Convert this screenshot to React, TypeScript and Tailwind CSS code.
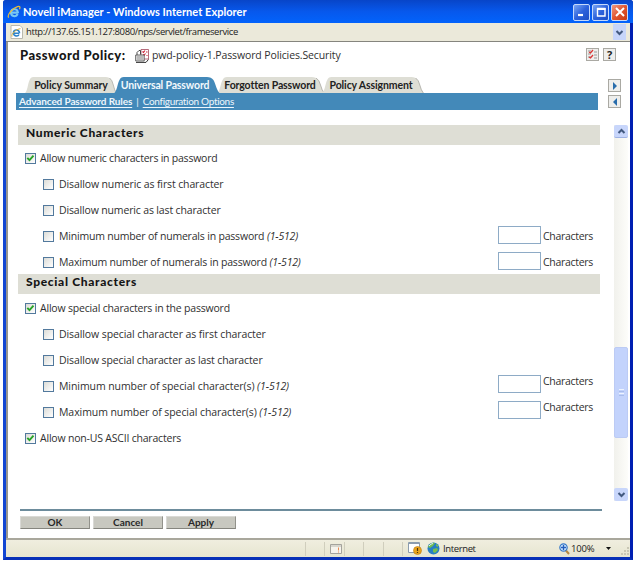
import type { ReactNode } from 'react';

const IeLogo = ({ size }: { size: number }) => (
  <svg width={size} height={size} viewBox="0 0 16 16" fill="none">
    <path d="M12.5 9H4.6a3.6 3.6 0 0 0 6.9 1.6M4.6 8.4h7.9A4.2 4.2 0 0 0 4.3 8c0 5 6 6.500 8 2.500" stroke="#79c8f4" strokeWidth="2.200" />
    <path d="M2 14.500C-.5 12 6 3.500 12 1.800c3-.8 3.300.7 2.200 3" stroke="#e9bd3c" strokeWidth="1.400" />
  </svg>
);

const PageIcon = () => (
  <svg width="13" height="14" viewBox="0 0 13 14" fill="none">
    <path d="M1 .5h9l2.500 2.500v10.500H1z" fill="#fff" stroke="#b9b9ae" />
    <path d="M9.200 8.300H3.500a3 3 0 0 1 5.900-1v.9M3.500 8.300c.2 3 4.500 3.500 5.500 1.200" stroke="#2d84cb" strokeWidth="1.600" />
    <path d="M2 11.500C1 9 6 4 10.500 3.700" stroke="#d9b13b" />
  </svg>
);

const PolicyIcon = () => (
  <svg width="14" height="14" viewBox="0 0 14 14" fill="none">
    <path d="M6 .5h7.500v9.500H6z" fill="#fff" stroke="#a3475a" strokeWidth=".8" />
    <path d="M2 6V3.500l2-2h1.500v4" stroke="#444" />
    <path d="m7.500 2.500 1 1 1.500-2M8 5.500l1 1 1.500-2M11 3h1.500M11.500 6.500h1" stroke="#cf2338" strokeWidth="1.100" />
    <path d="M.7 6h8.500v6H.7z" fill="#e8e8e8" stroke="#555" strokeWidth=".9" />
    <path d="M2 8h6M2 10h6" stroke="#777" strokeWidth=".8" />
    <path d="M1 13.400h10l2.500-3" stroke="#333" />
  </svg>
);

const Chevron = ({ up = false }: { up?: boolean }) => (
  <svg width="9" height="7" viewBox="0 0 9 7" fill="none">
    <path d={up ? 'M1.500 5 4.500 2l3 3' : 'M1.500 2l3 3 3-3'} stroke="#42597f" strokeWidth="2" />
  </svg>
);

const WinButton = ({ kind }: { kind: 'min' | 'max' | 'close' }) => (
  <div
    className={`flex h-[17px] w-[17px] items-center justify-center rounded-[2px] border border-[#c5d9fb] bg-linear-to-br ${
      kind === 'close' ? 'from-[#ee9880] via-[#e0552f] to-[#c83a12]' : 'from-[#7ca5f3] via-[#2d62dc] to-[#1d4dc4]'
    }`}
  >
    <svg width="12" height="12" viewBox="0 0 12 12" fill="none" stroke="#fff">
      {kind === 'min' && <path d="M2 9h5" strokeWidth="2.200" />}
      {kind === 'max' && <path d="M2 2.500h8.500M2.500 2v8h7.500V2" strokeWidth="1.400" />}
      {kind === 'max' && <path d="M2 3h8.500" strokeWidth="2" />}
      {kind === 'close' && <path d="m2 2 8 8M10 2l-8 8" strokeWidth="2" />}
    </svg>
  </div>
);

const ToolButton = ({ children }: { children: ReactNode }) => (
  <div className="flex h-[13px] w-[13px] shrink-0 items-center justify-center border border-[#aaa9a3] bg-[#eeeeec] text-[11px] leading-none font-bold text-[#222]">
    {children}
  </div>
);

const Checkbox = ({ checked }: { checked?: boolean }) => (
  <div className="flex h-[11px] w-[11px] shrink-0 items-center justify-center border border-[#52799d] bg-linear-to-br from-[#dcdcd7] to-white">
    {checked && (
      <svg width="9" height="9" viewBox="0 0 9 9" fill="none">
        <path d="m1.300 3.800 2.200 2.400 4-4.500" stroke="#27a327" strokeWidth="1.900" />
      </svg>
    )}
  </div>
);

type RowProps = { label: string; spacing: string; range?: boolean; checked?: boolean; count?: 'center' | 'raised' };

const Row = ({ label, spacing, range, checked, count }: RowProps) => (
  <div className={`flex h-[26px] items-center ${checked ? 'pl-[7px]' : 'pl-[25px]'}`}>
    <Checkbox checked={checked} />
    <span className={`${checked ? 'ml-[4px]' : 'ml-[5px]'} pt-px whitespace-pre ${spacing}`}>
      {label}
      {range && <i> (1-512)</i>}
    </span>
    {count && (
      <div className={`mr-[6px] ml-auto flex h-[18px] gap-[2px] ${count === 'raised' ? 'mt-[-5px]' : 'mt-[-2px]'}`}>
        <div className="h-[18px] w-[43px] border border-[#8eabc6] bg-white" />
        <span className={`w-[51px] tracking-[-0.3px] ${count === 'raised' ? 'leading-[13px]' : 'leading-[20px]'}`}>Characters</span>
      </div>
    )}
  </div>
);

const Section = ({ title, spacing }: { title: string; spacing: string }) => (
  <div className={`h-[20px] bg-[#deded5] pl-[8px] font-[Lato,sans-serif] text-[12px] leading-[16px] font-black whitespace-nowrap text-[#151515] ${spacing}`}>
    {title}
  </div>
);

const Tab = ({ label, width, active, spacing }: { label: string; width: string; active?: boolean; spacing: string }) => (
  <div className={`relative -mr-[5px] h-[17px] shrink-0 ${width} ${active ? 'z-10' : ''}`}>
    <svg className="absolute inset-0 h-full w-full" viewBox="0 0 100 17" preserveAspectRatio="none">
      <path
        d="M0 17C4 15 4 6 6 3Q7 0 10 0H87Q91 0 93 3C95 6 96 15 100 17z"
        fill={active ? '#4389b9' : '#deded5'}
      />
      {!active && <path d="M91 1Q94 3 95 8T99 17" fill="none" stroke="#aaa9a3" strokeWidth=".8" />}
    </svg>
    <span
      className={`relative block text-center font-[Lato,sans-serif] text-[10.500px] leading-[16px] font-bold whitespace-nowrap ${spacing} ${
        active ? 'text-[#f2f8fc]' : 'text-[#222]'
      }`}
    >
      {label}
    </span>
  </div>
);

const ActionButton = ({ label }: { label: string }) => (
  <div className="h-[13px] w-[70px] border border-t-[#d9d9d5] border-r-[#92928b] border-b-[#85857e] border-l-[#d9d9d5] bg-[#c8c8c0] text-center font-[Lato,sans-serif] text-[10px] leading-[11px] font-bold text-[#292929]">
    {label}
  </div>
);

const StatusBar = () => (
  <div className="flex h-[19px] shrink-0 items-center border-t-2 border-[#a9a79c] bg-linear-to-b from-[#f0eedf] to-[#e6e5d0] text-[9.500px] text-[#222]">
    <div className="ml-[299px] h-[14px] w-[19px] border-l border-[#d0cebd]" />
    <div className="flex h-[14px] w-[21px] items-center border-x border-[#d0cebd] pl-[5px]">
      <svg width="12" height="10" viewBox="0 0 12 10">
        <path d="M.5.500h11v9H.5z" fill="#f7f4ed" stroke="#a4a39c" />
        <path d="M1 2h10" stroke="#b8b8b0" />
        <path d="M8.500 3.500v3M8.500 7.500v1" stroke="#e98b54" />
      </svg>
    </div>
    <div className="h-[14px] w-[19px] border-r border-[#d0cebd]" />
    <div className="h-[14px] w-[20px] border-r border-[#d0cebd]" />
    <div className="h-[14px] w-[19px] border-r border-[#d0cebd]" />
    <svg className="ml-[5px]" width="14" height="13" viewBox="0 0 14 13">
      <path d="M.5.500h11v10H.5z" fill="#fff" stroke="#8b9cae" />
      <path d="M1 1.500h10" stroke="#8b9cae" />
      <circle cx="9.500" cy="8.500" r="4" fill="#e9a51d" stroke="#bc7a12" strokeWidth=".6" />
      <path d="M9.500 6v3M9.500 10v1" stroke="#4d3106" strokeWidth="1.200" />
    </svg>
    <svg className="ml-[5px]" width="13" height="13" viewBox="0 0 13 13">
      <circle cx="6.500" cy="6.500" r="6" fill="#277fc4" />
      <path d="M2 3q3-3 6-2L6 4 3 6 1 5zM6 7l4-1 1 2-3 3-2-1zM9 2l2 1v2L9 4z" fill="#75bd50" />
      <path d="M2 4q2-2.500 4-2.500" stroke="#d9efff" fill="none" />
    </svg>
    <span className="ml-[3px] pt-px tracking-[-0.38px]">Internet</span>
    <div className="ml-auto flex items-center">
      <svg width="11" height="12" viewBox="0 0 11 12" fill="none">
        <path d="m6.500 7 3.500 4" stroke="#b88a42" strokeWidth="2" />
        <circle cx="4.500" cy="4.500" r="3.700" fill="#d4ebff" stroke="#3b7bc8" strokeWidth="1.200" />
        <path d="M4.500 2v5M2 4.500h5" stroke="#245fbd" strokeWidth="1.400" />
      </svg>
      <span className="w-[36px] pt-px pl-px tracking-[-0.2px]">100%</span>
      <svg width="5" height="3" viewBox="0 0 5 3">
        <path d="M0 0h5L2.500 3z" fill="#111" />
      </svg>
      <svg className="mt-[5px] ml-[9px]" width="10" height="10" viewBox="0 0 10 10" fill="#c9c7b4">
        <path d="M7 1h2v2H7zM4 4h2v2H4zM7 4h2v2H7zM1 7h2v2H1zM4 7h2v2H4zM7 7h2v2H7z" />
      </svg>
    </div>
  </div>
);

export default function App() {
  return (
    <div className="h-[562px] w-[633px] overflow-hidden bg-white pl-[3px] font-['Open_Sans','Liberation_Sans',sans-serif] text-[10.500px] text-[#303030]">
      <div className="flex h-[560px] w-[630px] flex-col rounded-t-[3px] border-r-[3px] border-b-[3px] border-l-[3px] border-r-[#001fb2] border-b-[#0730b7] border-l-[#1246d3] bg-white">
        <header className="-mx-[3px] flex h-[23px] shrink-0 items-center rounded-t-[3px] bg-linear-to-b from-[#0845c8] via-[#0758ec] to-[#0263fc] pt-px pr-[5px] pl-[4px]">
          <IeLogo size={14} />
          <span className="ml-[2px] font-[Lato,sans-serif] text-[11px] font-bold tracking-[0.04px] whitespace-nowrap text-white">Novell iManager - Windows Internet Explorer</span>
          <div className="ml-auto flex gap-[2px]">
            <WinButton kind="min" />
            <WinButton kind="max" />
            <WinButton kind="close" />
          </div>
        </header>
        <div className="flex h-[19px] shrink-0 items-center border-b border-[#85857e] bg-[#ebe9da] pr-[4px] pl-[4px] text-[9.500px] text-[#222]">
          <PageIcon />
          <span className="ml-[3px] pt-px tracking-[-0.41px] whitespace-nowrap">http://137.65.151.127:8080/nps/servlet/frameservice</span>
          <div className="ml-auto flex h-[16px] w-[13px] items-center justify-center bg-[#c6d5fa]"><Chevron /></div>
        </div>

        <main className="flex h-[496px] shrink-0 flex-col border-l-2 border-[#96958f]">
          <div className="flex h-[28px] shrink-0 items-center pr-[14px] pl-[12px]">
            <span className="w-[106px] font-[Lato,sans-serif] text-[13px] font-black tracking-[0.48px] whitespace-nowrap text-[#171717]">Password Policy:</span>
            <div className="ml-[9px] shrink-0"><PolicyIcon /></div>
            <span className="ml-[3px] text-[10.500px] tracking-[-0.12px] whitespace-nowrap">pwd-policy-1.Password Policies.Security</span>
            <div className="mt-[-4px] ml-auto flex gap-[4px]">
              <ToolButton>
                <svg width="11" height="11" viewBox="0 0 11 11" fill="none">
                  <path d="M1 2h3M1 5h3M1 8h3M7 3h3M7 6h3M7 9h3" stroke="#999" />
                  <path d="m2 3 1.500 1L6 1M2 8l1.500 1L6 6" stroke="#dc3535" strokeWidth="1.300" />
                </svg>
              </ToolButton>
              <ToolButton>?</ToolButton>
            </div>
          </div>

          <div className="mt-[7px] flex h-[36px] shrink-0 pl-[8px]">
            <div className="w-[582px]">
              <div className="flex h-[16px] pl-[8px]">
                <Tab label="Policy Summary" width="w-[94px]" spacing="tracking-[-0.05px]" />
                <Tab label="Universal Password" width="w-[108px]" active spacing="-left-[2px] tracking-[-0.14px]" />
                <Tab label="Forgotten Password" width="w-[110px]" spacing="-left-[1px] tracking-[-0.12px]" />
                <Tab label="Policy Assignment" width="w-[104px]" spacing="-left-[2px] tracking-[-0.12px]" />
              </div>
              <nav className="relative z-20 flex h-[17px] bg-[#4389b9] pl-[3px] font-[Lato,sans-serif] text-[10px] leading-[16px] whitespace-nowrap text-[#edf6fc]">
                <span className="font-bold tracking-[-0.12px] underline underline-offset-2">Advanced Password Rules</span>
                <span className="mx-[4px]">|</span>
                <span className="tracking-[-0.31px] underline underline-offset-2">Configuration Options</span>
              </nav>
            </div>
            <div className="mt-[2px] ml-[10px] flex flex-col gap-[3px]">
              {['M3 1v8l4-4z', 'M7 1v8L3 5z'].map((d) => (
                <ToolButton key={d}>
                  <svg width="10" height="10" viewBox="0 0 10 10"><path d={d} fill="#286cab" /></svg>
                </ToolButton>
              ))}
            </div>
          </div>

          <div className="mt-[12px] flex h-[376px] shrink-0 pl-[10px]">
            <div className="w-[582px]">
              <Section title="Numeric Characters" spacing="tracking-[0.63px]" />
              <Row label="Allow numeric characters in password" checked spacing="tracking-[-0.23px]" />
              <Row label="Disallow numeric as first character" spacing="tracking-[-0.12px]" />
              <Row label="Disallow numeric as last character" spacing="tracking-[-0.15px]" />
              <Row label="Minimum number of numerals in password" range count="center" spacing="tracking-[-0.19px]" />
              <Row label="Maximum number of numerals in password" range count="center" spacing="tracking-[-0.18px]" />
              <div className="-mt-px"><Section title="Special Characters" spacing="tracking-[0.68px]" /></div>
              <div className="h-px" />
              <Row label="Allow special characters in the password" checked spacing="tracking-[-0.19px]" />
              <Row label="Disallow special character as first character" spacing="tracking-[-0.09px]" />
              <Row label="Disallow special character as last character" spacing="tracking-[-0.12px]" />
              <Row label="Minimum number of special character(s)" range count="raised" spacing="tracking-[-0.07px]" />
              <Row label="Maximum number of special character(s)" range count="raised" spacing="tracking-[-0.07px]" />
              <Row label="Allow non-US ASCII characters" checked spacing="tracking-[-0.2px]" />
            </div>
            <div className="ml-[14px] flex w-[14px] flex-col bg-linear-to-r from-[#f1f1ec] to-[#fdfdfa]">
              <div className="flex h-[13px] items-center justify-center rounded-[2px] border-b border-[#9eb2e4] bg-[#c8d6fb]"><Chevron up /></div>
              <div className="mt-[209px] flex h-[91px] flex-col items-center justify-center gap-px rounded-[2px] border border-[#bccbf4] bg-[#c3d3fc]">
                <div className="h-px w-[5px] bg-[#eef4ff]" />
                <div className="h-px w-[5px] bg-[#a9bdec]" />
                <div className="h-px w-[5px] bg-[#eef4ff]" />
                <div className="h-px w-[5px] bg-[#a9bdec]" />
              </div>
              <div className="mt-auto flex h-[13px] items-center justify-center rounded-[2px] bg-[#c8d6fb]"><Chevron /></div>
            </div>
          </div>

          <div className="mt-[8px] ml-[12px] h-[2px] w-[582px] bg-[#6d8c9c]" />
          <div className="mt-[5px] ml-[12px] flex gap-[3px]">
            <ActionButton label="OK" />
            <ActionButton label="Cancel" />
            <ActionButton label="Apply" />
          </div>
        </main>
        <StatusBar />
      </div>
    </div>
  );
}
